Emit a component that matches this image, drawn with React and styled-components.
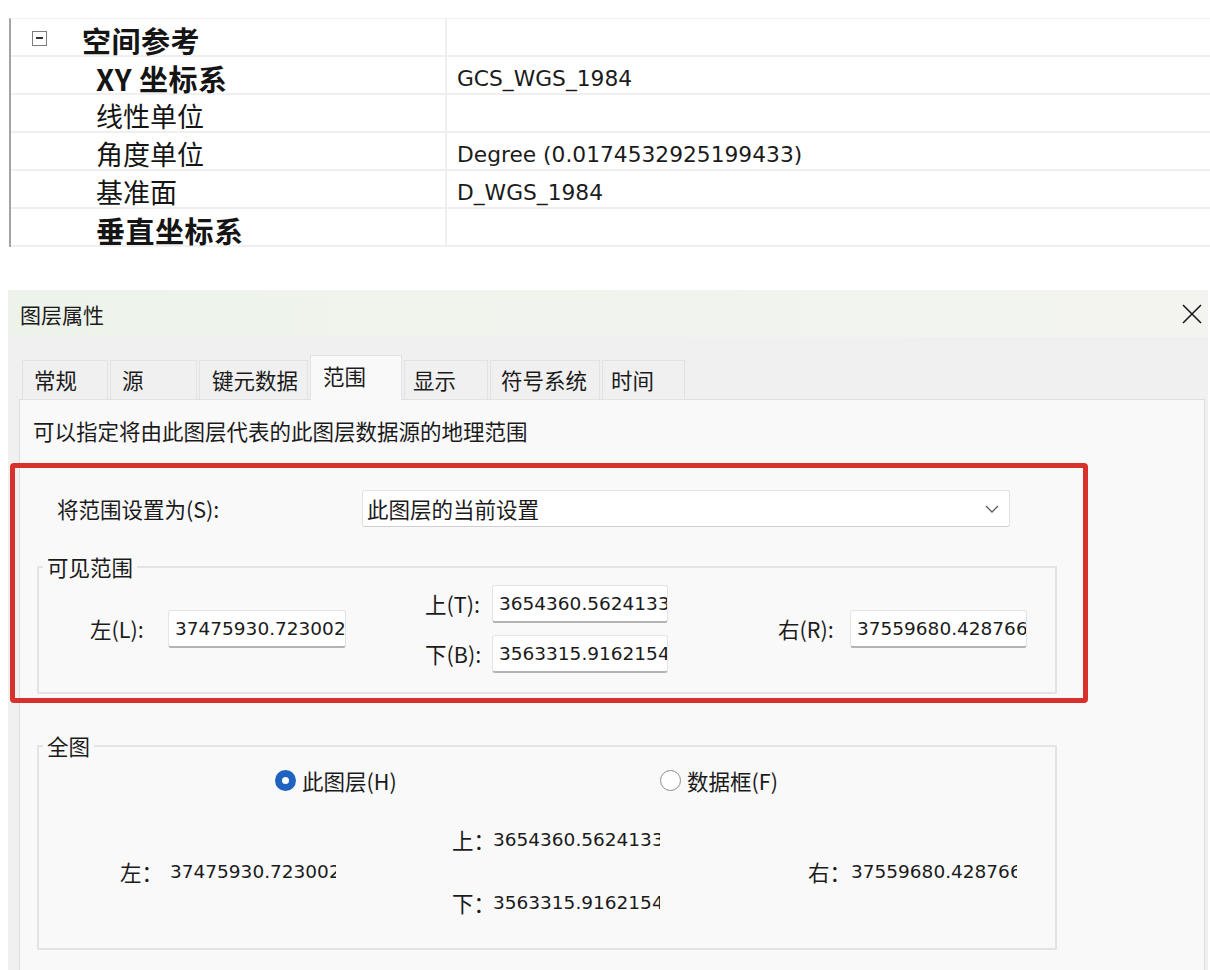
import React from 'react';
import styled, { createGlobalStyle } from 'styled-components';

const Global = createGlobalStyle`
  html, body { margin: 0; padding: 0; background: #ffffff; }
  body {
    width: 1210px; height: 970px; overflow: hidden;
    font-family: "Noto Sans CJK SC", "Noto Sans", sans-serif;
    color: #1b1b1b;
  }
`;

const NUM_FONT = `"DejaVu Sans", "Liberation Sans", sans-serif`;

const Page = styled.div`
  display: flex;
  flex-direction: column;
  padding-top: 18px;
`;

/* ---------- property grid ---------- */
const PropGrid = styled.div`
  margin-left: 9px;
  border-left: 2px solid #a4a4a4;
  border-top: 1px solid #f1f1f1;
  display: flex;
  flex-direction: column;
`;

const PropRow = styled.div`
  display: grid;
  grid-template-columns: 436px 1fr;
  height: 38px;
  box-sizing: border-box;
  border-bottom: 2px solid #efefef;
`;

const PropLabel = styled.div`
  display: flex;
  align-items: center;
  gap: 35px;
  padding: 4px 0 0 ${p => p.$indent}px;
  border-right: 2px solid #efefef;
  font-size: ${p => (p.$bold ? 29 : 27)}px;
  font-weight: ${p => (p.$bold ? 700 : 400)};
  letter-spacing: ${p => (p.$bold ? '0.5px' : '0')};
  line-height: 34px;
  color: #151515;
  white-space: nowrap;
`;

const PropValue = styled.div`
  display: flex;
  align-items: center;
  padding: 4px 0 0 10px;
  font-family: ${NUM_FONT};
  font-size: 21.75px;
  color: #1b1b1b;
  white-space: nowrap;
`;

const Collapse = styled.span`
  flex: none;
  width: 15px;
  height: 15px;
  margin-top: -4px;
  box-sizing: border-box;
  border: 1.5px solid #7c7c7c;
  display: flex;
  align-items: center;
  justify-content: center;
  &::after {
    content: "";
    width: 7px;
    height: 2px;
    background: #333;
  }
`;

/* ---------- dialog ---------- */
const Dialog = styled.div`
  margin: 43px 2px 0 8px;
  height: 700px;
  background: #f0f0f0;
  display: flex;
  flex-direction: column;
`;

const TitleBar = styled.div`
  height: 47px;
  flex: none;
  display: flex;
  align-items: center;
  justify-content: space-between;
  padding: 0 6px 0 12px;
  background: linear-gradient(90deg, #edf3ea 0%, #f1f4ee 55%, #f3f4f0 100%);
  font-size: 21px;
  color: #1a1a1a;
`;

const Body = styled.div`
  flex: 1;
  display: flex;
  flex-direction: column;
  padding: 18px 3px 0 11px;
`;

const TabStrip = styled.div`
  display: flex;
  align-items: flex-end;
  gap: 2px;
  padding-left: 3px;
  margin-bottom: -1px;
  position: relative;
  z-index: 1;
`;

const Tab = styled.div`
  width: ${p => p.$w}px;
  height: ${p => (p.$active ? 45 : 40)}px;
  box-sizing: border-box;
  display: flex;
  align-items: center;
  padding: 0 0 ${p => (p.$active ? 5 : 1)}px ${p => p.$pad}px;
  background: ${p => (p.$active ? '#f9f9f9' : '#f0f0f0')};
  border: 1px solid #e2e2e2;
  border-bottom: ${p => (p.$active ? 'none' : '1px solid #e2e2e2')};
  font-size: 21.5px;
  color: #1b1b1b;
  white-space: nowrap;
`;

const Panel = styled.div`
  flex: 1;
  position: relative;
  background: #f9f9f9;
  border: 1px solid #dedede;
  display: flex;
  flex-direction: column;
  padding-top: 17px;
`;

const Desc = styled.div`
  margin-left: 13px;
  font-size: 21.5px;
  line-height: 28px;
`;

const SetRow = styled.div`
  margin-top: 45px;
  display: flex;
  align-items: center;
  padding-left: 37px;
`;

const Text = styled.span`
  width: ${p => p.$w}px;
  flex: none;
  font-size: 21.5px;
  line-height: 28px;
  white-space: nowrap;
`;

const Dropdown = styled.div`
  width: 648px;
  height: 37px;
  box-sizing: border-box;
  background: #ffffff;
  border: 1px solid #e2e2e2;
  border-bottom: 1.5px solid #cfcfcf;
  border-radius: 3px;
  display: flex;
  align-items: center;
  justify-content: space-between;
  padding: 0 10px 0 4px;
  font-size: 21.5px;
`;

const Group = styled.fieldset`
  margin: ${p => p.$mt}px 0 0 17px;
  width: 1020px;
  box-sizing: border-box;
  padding: 0 0 ${p => p.$pb}px 0;
  border: 2px solid #e4e4e4;
  min-width: 0;
`;

const Legend = styled.legend`
  margin-left: 4px;
  padding: 0 4px;
  font-size: 21.5px;
  line-height: 24px;
`;

const GroupBody = styled.div`
  margin-top: ${p => p.$mt}px;
  display: flex;
  align-items: center;
  padding-left: ${p => p.$pl}px;
`;

const Column = styled.div`
  margin-left: ${p => p.$ml || 0}px;
  width: ${p => (p.$w ? `${p.$w}px` : 'auto')};
  flex: none;
  display: flex;
  flex-direction: column;
  gap: ${p => p.$gap || 0}px;
`;

const Field = styled.div`
  display: flex;
  align-items: center;
`;

const InputBox = styled.div`
  width: ${p => p.$w}px;
  height: 38px;
  box-sizing: border-box;
  background: #ffffff;
  border: 1px solid #e4e4e4;
  border-bottom: 2px solid #b4b4b4;
  border-radius: 3px;
  display: flex;
  align-items: center;
  padding-left: 6px;
  overflow: hidden;
  white-space: nowrap;
  font-family: ${NUM_FONT};
  font-size: 18.5px;
  color: #1b1b1b;
`;

const ValueText = styled.span`
  width: ${p => p.$w}px;
  overflow: hidden;
  white-space: nowrap;
  font-family: ${NUM_FONT};
  font-size: 18.5px;
  line-height: 28px;
  color: #1b1b1b;
`;

const RadioRow = styled.div`
  margin-top: 7px;
  height: 30px;
  display: flex;
  align-items: center;
  padding-left: 236px;
`;

const RadioItem = styled.div`
  width: ${p => (p.$w ? `${p.$w}px` : 'auto')};
  display: flex;
  align-items: center;
  gap: 6px;
  font-size: 21.5px;
`;

const RadioDot = styled.span`
  flex: none;
  width: 21px;
  height: 21px;
  box-sizing: border-box;
  border-radius: 50%;
  background: #ffffff;
  border: ${p => (p.$on ? '7px solid #1f62c0' : '1.5px solid #8c8c8c')};
`;

const Annotation = styled.div`
  position: absolute;
  left: -10px;
  top: 63px;
  width: 1078px;
  height: 240px;
  box-sizing: border-box;
  border: 5px solid #d8302a;
  border-radius: 4px;
  pointer-events: none;
`;

const CloseIcon = () => (
  <svg width="20" height="20" viewBox="0 0 20 20">
    <path d="M1 1 L19 19 M19 1 L1 19" stroke="#1a1a1a" strokeWidth="1.6" fill="none" />
  </svg>
);

const Chevron = () => (
  <svg width="14" height="8" viewBox="0 0 14 8">
    <polyline points="1,1 7,7 13,1" stroke="#5a5a5a" strokeWidth="1.3" fill="none" />
  </svg>
);

const props = [
  { label: '空间参考', bold: true, cat: true, value: '' },
  { label: 'XY 坐标系', bold: true, value: 'GCS_WGS_1984' },
  { label: '线性单位', value: '' },
  { label: '角度单位', value: 'Degree (0.0174532925199433)' },
  { label: '基准面', value: 'D_WGS_1984' },
  { label: '垂直坐标系', bold: true, value: '' },
];

const tabs = [
  { t: '常规', w: 86, pad: 11 },
  { t: '源', w: 87, pad: 11 },
  { t: '键元数据', w: 109, pad: 12 },
  { t: '范围', w: 92, pad: 12, active: true },
  { t: '显示', w: 84, pad: 8 },
  { t: '符号系统', w: 110, pad: 10 },
  { t: '时间', w: 83, pad: 8 },
];

const L = '37475930.72300264';
const T = '3654360.56241336';
const B = '3563315.91621546';
const R = '37559680.42876644';

export default function App() {
  return (
    <>
      <Global />
      <Page>
        <PropGrid>
          {props.map(p => (
            <PropRow key={p.label}>
              <PropLabel $indent={p.cat ? 21 : 85} $bold={p.bold}>
                {p.cat && <Collapse />}
                {p.label}
              </PropLabel>
              <PropValue>{p.value}</PropValue>
            </PropRow>
          ))}
        </PropGrid>

        <Dialog>
          <TitleBar>
            <span>图层属性</span>
            <CloseIcon />
          </TitleBar>
          <Body>
            <TabStrip>
              {tabs.map(t => (
                <Tab key={t.t} $w={t.w} $pad={t.pad} $active={t.active}>
                  {t.t}
                </Tab>
              ))}
            </TabStrip>
            <Panel>
              <Desc>可以指定将由此图层代表的此图层数据源的地理范围</Desc>
              <SetRow>
                <Text $w={305}>将范围设置为(S):</Text>
                <Dropdown>
                  <span>此图层的当前设置</span>
                  <Chevron />
                </Dropdown>
              </SetRow>

              <Group $mt={28} $pb={19}>
                <Legend>可见范围</Legend>
                <GroupBody $mt={6} $pl={51}>
                  <Column>
                    <Field>
                      <Text $w={78}>左(L):</Text>
                      <InputBox $w={178}>{L}</InputBox>
                    </Field>
                  </Column>
                  <Column $ml={79} $gap={12}>
                    <Field>
                      <Text $w={67}>上(T):</Text>
                      <InputBox $w={176}>{T}</InputBox>
                    </Field>
                    <Field>
                      <Text $w={67}>下(B):</Text>
                      <InputBox $w={176}>{B}</InputBox>
                    </Field>
                  </Column>
                  <Column $ml={110}>
                    <Field>
                      <Text $w={72}>右(R):</Text>
                      <InputBox $w={177}>{R}</InputBox>
                    </Field>
                  </Column>
                </GroupBody>
              </Group>

              <Group $mt={40} $pb={31}>
                <Legend>全图</Legend>
                <RadioRow>
                  <RadioItem $w={385}>
                    <RadioDot $on />
                    此图层(H)
                  </RadioItem>
                  <RadioItem>
                    <RadioDot />
                    数据框(F)
                  </RadioItem>
                </RadioRow>
                <GroupBody $mt={31} $pl={81}>
                  <Column $w={332}>
                    <Field>
                      <Text $w={50}>左：</Text>
                      <ValueText $w={166}>{L}</ValueText>
                    </Field>
                  </Column>
                  <Column $w={356} $gap={35}>
                    <Field>
                      <Text $w={41}>上：</Text>
                      <ValueText $w={167}>{T}</ValueText>
                    </Field>
                    <Field>
                      <Text $w={41}>下：</Text>
                      <ValueText $w={167}>{B}</ValueText>
                    </Field>
                  </Column>
                  <Column>
                    <Field>
                      <Text $w={43}>右：</Text>
                      <ValueText $w={166}>{R}</ValueText>
                    </Field>
                  </Column>
                </GroupBody>
              </Group>

              <Annotation />
            </Panel>
          </Body>
        </Dialog>
      </Page>
    </>
  );
}
